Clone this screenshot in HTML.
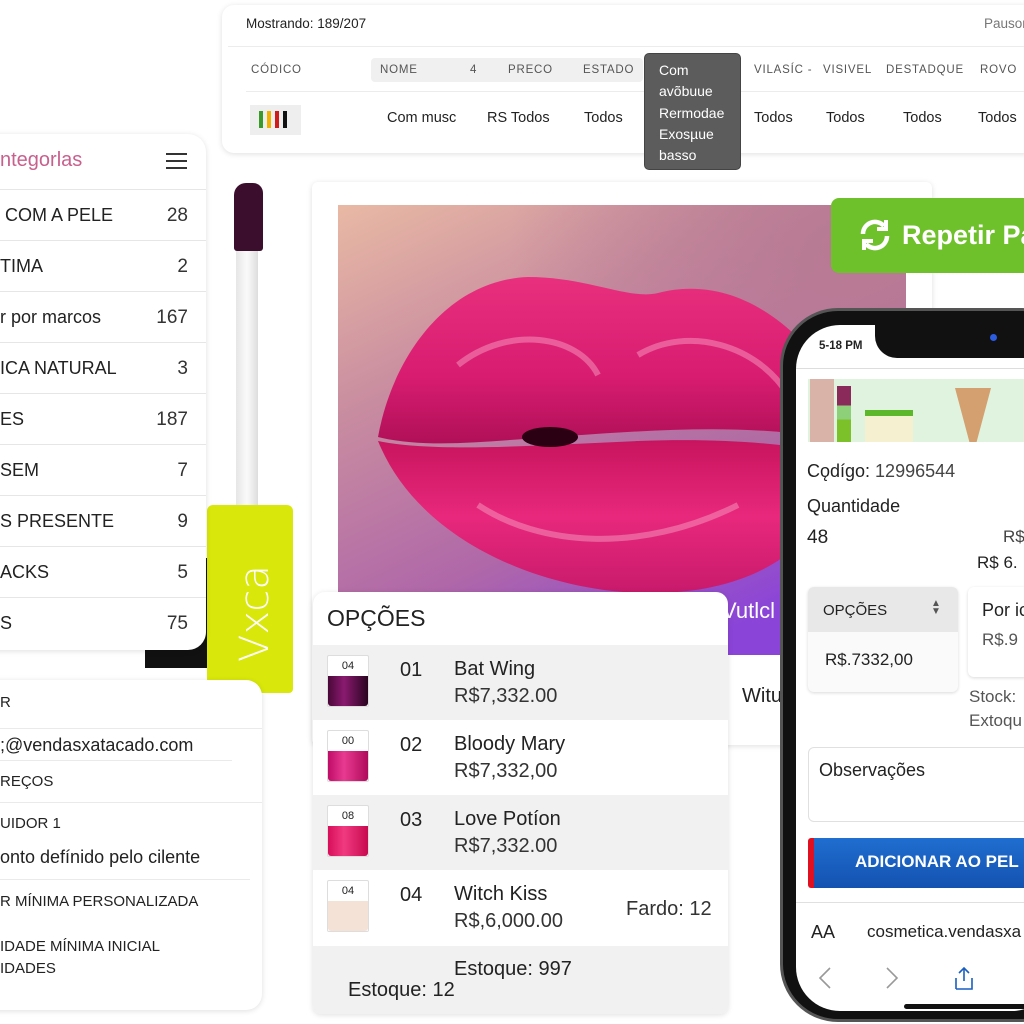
<!DOCTYPE html>
<html><head><meta charset="utf-8"><style>
*{margin:0;padding:0;box-sizing:border-box}
body{width:1024px;height:1024px;overflow:hidden;background:#fff;font-family:"Liberation Sans",sans-serif;color:#222;position:relative}
.a{position:absolute;white-space:nowrap}
.card{position:absolute;background:#fff;box-shadow:0 1px 6px rgba(0,0,0,.13)}
.hd{font-size:11.5px;letter-spacing:.8px;color:#555}
.t{font-size:14.5px;color:#222}
.cat{position:absolute;left:0;width:206px;height:51px;border-top:1px solid #e6e6e6;font-size:18px;color:#222}
.cat span{position:absolute;top:15px}
.cat b{position:absolute;right:18px;top:15px;font-weight:normal;color:#333;font-size:19px}
.row{position:absolute;left:313px;width:415px;height:75px}
.sw{position:absolute;left:14px;top:10px;width:42px;height:52px;border:1px solid #ddd;background:#fff;border-radius:2px;font-size:11px;text-align:center;line-height:20px}
.sw i{position:absolute;left:0;right:0;bottom:0;height:30px;border-radius:0 0 3px 3px}
.row .n{position:absolute;left:87px;top:14px;font-size:20px}
.row .nm{position:absolute;left:141px;top:13px;font-size:20px}
.row .p{position:absolute;left:141px;top:40px;font-size:20px;color:#333}
</style></head><body>

<!-- top card -->
<div class="card" style="left:222px;top:5px;width:820px;height:148px;border-radius:12px"></div>
<div class="a" style="left:246px;top:16px;font-size:13.5px">Mostrando: 189/207</div>
<div class="a" style="left:984px;top:16px;font-size:13.5px;color:#777">Pausor</div>
<div class="a" style="left:228px;top:46px;width:796px;height:1px;background:#ececec"></div>
<div class="a" style="left:371px;top:58px;width:272px;height:24px;background:#f0f0f0;border-radius:4px"></div>
<div class="a hd" style="left:251px;top:64px">CÓDICO</div>
<div class="a hd" style="left:380px;top:64px">NOME</div>
<div class="a hd" style="left:470px;top:64px">4</div>
<div class="a hd" style="left:508px;top:64px">PRECO</div>
<div class="a hd" style="left:583px;top:64px">ESTADO</div>
<div class="a hd" style="left:754px;top:64px">VILASÍC -</div>
<div class="a hd" style="left:823px;top:64px">VISIVEL</div>
<div class="a hd" style="left:886px;top:64px">DESTADQUE</div>
<div class="a hd" style="left:980px;top:64px">ROVO</div>
<div class="a" style="left:246px;top:91px;width:778px;height:1px;background:#ececec"></div>
<div class="a" style="left:250px;top:105px;width:51px;height:30px;background:#eee"></div>
<div class="a" style="left:259px;top:111px;width:4px;height:17px;background:#3a9a2a"></div>
<div class="a" style="left:267px;top:111px;width:4px;height:17px;background:#f0b400"></div>
<div class="a" style="left:275px;top:111px;width:4px;height:17px;background:#d01b1b"></div>
<div class="a" style="left:283px;top:111px;width:4px;height:17px;background:#111"></div>
<div class="a t" style="left:387px;top:110px">Com musc</div>
<div class="a t" style="left:487px;top:110px">RS Todos</div>
<div class="a t" style="left:584px;top:110px">Todos</div>
<div class="a t" style="left:754px;top:110px">Todos</div>
<div class="a t" style="left:826px;top:110px">Todos</div>
<div class="a t" style="left:903px;top:110px">Todos</div>
<div class="a t" style="left:978px;top:110px">Todos</div>
<div class="a" style="left:644px;top:53px;width:97px;height:117px;background:#5c5c5c;border:1px solid #444;border-radius:5px;color:#fff;font-size:14px;line-height:21.3px;padding:6px 0 0 14px">Com<br>avõbuue<br>Rermodae<br>Exosµue<br>basso</div>

<!-- wand -->
<div class="a" style="left:145px;top:558px;width:80px;height:110px;background:#111"></div>
<div class="a" style="left:236px;top:245px;width:22px;height:265px;background:linear-gradient(90deg,#e6e6e6,#fafafa 50%,#ddd)"></div>
<div class="a" style="left:234px;top:183px;width:29px;height:68px;background:#3b0e2e;border-radius:12px 10px 3px 3px"></div>
<div class="a" style="left:207px;top:505px;width:86px;height:188px;background:#d9e80a;border-radius:6px 6px 4px 4px"></div>
<div class="a" style="left:232px;top:662px;font-family:'DejaVu Sans',sans-serif;font-weight:200;font-size:40px;color:#fff;transform:rotate(-90deg);transform-origin:left top">Vxca</div>

<!-- categories -->
<div class="card" style="left:-10px;top:134px;width:216px;height:516px;border-radius:0 18px 18px 0"></div>
<div class="a" style="left:0;top:149px;font-size:20px;color:#c8608e">ntegorlas</div>
<div class="a" style="left:166px;top:153px;width:21px;height:2px;background:#333;box-shadow:0 7px 0 #333,0 14px 0 #333"></div>
<div class="cat" style="top:189px"><span>&nbsp;COM A PELE</span><b>28</b></div>
<div class="cat" style="top:240px"><span>TIMA</span><b>2</b></div>
<div class="cat" style="top:291px"><span>r por marcos</span><b>167</b></div>
<div class="cat" style="top:342px"><span>ICA NATURAL</span><b>3</b></div>
<div class="cat" style="top:393px"><span>ES</span><b>187</b></div>
<div class="cat" style="top:444px"><span>SEM</span><b>7</b></div>
<div class="cat" style="top:495px"><span>S PRESENTE</span><b>9</b></div>
<div class="cat" style="top:546px"><span>ACKS</span><b>5</b></div>
<div class="cat" style="top:597px"><span>S</span><b>75</b></div>

<!-- bottom-left card -->
<div class="card" style="left:-10px;top:680px;width:272px;height:330px;border-radius:0 16px 16px 0"></div>
<div class="a" style="left:0;top:694px;font-size:15px">R</div>
<div class="a" style="left:0;top:728px;width:262px;height:1px;background:#eaeaea"></div>
<div class="a" style="left:0;top:735px;font-size:18px">;@vendasxatacado.com</div>
<div class="a" style="left:0;top:760px;width:232px;height:1px;background:#eaeaea"></div>
<div class="a" style="left:0;top:773px;font-size:15px">REÇOS</div>
<div class="a" style="left:0;top:802px;width:262px;height:1px;background:#eaeaea"></div>
<div class="a" style="left:0;top:815px;font-size:15px">UIDOR 1</div>
<div class="a" style="left:0;top:847px;font-size:18px">onto defínido pelo cilente</div>
<div class="a" style="left:0;top:879px;width:250px;height:1px;background:#eaeaea"></div>
<div class="a" style="left:0;top:893px;font-size:15px">R MÍNIMA PERSONALIZADA</div>
<div class="a" style="left:0;top:936px;font-size:15px;line-height:22px">IDADE MÍNIMA INICIAL<br>IDADES</div>

<!-- main card -->
<div class="card" style="left:312px;top:182px;width:620px;height:563px;border-radius:6px"></div>
<svg class="a" style="left:338px;top:205px" width="568" height="450" viewBox="0 0 568 450">
<defs>
<linearGradient id="bg" x1="0" y1="0" x2="0.6" y2="1"><stop offset="0" stop-color="#e9b9a4"/><stop offset=".35" stop-color="#c88ca0"/><stop offset=".7" stop-color="#b068a8"/><stop offset="1" stop-color="#8a44d8"/></linearGradient>
<radialGradient id="tr" cx=".9" cy=".1" r=".6"><stop offset="0" stop-color="#b77a92"/><stop offset="1" stop-color="#b77a92" stop-opacity="0"/></radialGradient>
<linearGradient id="up" x1="0" y1="0" x2="0" y2="1"><stop offset="0" stop-color="#e8307e"/><stop offset=".6" stop-color="#d81c70"/><stop offset="1" stop-color="#b01058"/></linearGradient>
<linearGradient id="lo" x1="0" y1="0" x2="0" y2="1"><stop offset="0" stop-color="#c8145e"/><stop offset=".5" stop-color="#e8287c"/><stop offset="1" stop-color="#c81a6c"/></linearGradient>
</defs>
<rect width="568" height="450" fill="url(#bg)"/>
<rect width="568" height="450" fill="url(#tr)"/>
<path d="M40,232 C55,150 110,75 190,72 C250,72 290,95 320,88 C390,70 460,110 515,205 C525,232 505,238 480,232 C400,218 300,226 215,232 C150,236 90,244 40,232Z" fill="url(#up)"/>
<path d="M40,236 C100,248 200,240 300,236 C400,232 470,242 505,250 C495,330 430,392 300,388 C200,384 80,335 40,236Z" fill="url(#lo)"/>
<path d="M120,160 C170,120 240,130 260,170 M300,150 C350,120 420,140 450,190 M140,300 C200,340 300,350 400,300" stroke="#f79ac2" stroke-width="6" fill="none" opacity=".5"/>
<ellipse cx="212" cy="232" rx="28" ry="10" fill="#2a0012"/>
</svg>
<div class="a" style="left:722px;top:598px;font-size:22px;color:#fff">Vutlcl</div>
<div class="a" style="left:742px;top:685px;font-size:20px">Witu</div>

<!-- options -->
<div class="card" style="left:313px;top:592px;width:415px;height:422px;border-radius:12px 12px 8px 8px"></div>
<div class="a" style="left:327px;top:605px;font-size:23px">OPÇÕES</div>
<div class="row" style="top:645px;background:#f1f1f1"><div class="sw">04<i style="background:linear-gradient(90deg,#4a0838,#8a1a70 40%,#2a0420)"></i></div><div class="n">01</div><div class="nm">Bat Wing</div><div class="p">R$7,332.00</div></div>
<div class="row" style="top:720px;background:#fff"><div class="sw">00<i style="background:linear-gradient(90deg,#c00c68,#e83a90 40%,#b00a5c)"></i></div><div class="n">02</div><div class="nm">Bloody Mary</div><div class="p">R$7,332,00</div></div>
<div class="row" style="top:795px;background:#f1f1f1"><div class="sw">08<i style="background:linear-gradient(90deg,#d80e5a,#f03a80 40%,#c80a50)"></i></div><div class="n">03</div><div class="nm">Love Potíon</div><div class="p">R$7,332.00</div></div>
<div class="row" style="top:870px;background:#fff"><div class="sw">04<i style="background:#f5e2d6"></i></div><div class="n">04</div><div class="nm">Witch Kiss</div><div class="p">R$,6,000.00</div><div class="a" style="left:313px;top:28px;font-size:20px;color:#333">Fardo: 12</div></div>
<div class="a" style="left:313px;top:946px;width:415px;height:68px;background:#f1f1f1;border-radius:0 0 8px 8px"></div>
<div class="a" style="left:454px;top:958px;font-size:20px">Estoque: 997</div>
<div class="a" style="left:348px;top:979px;font-size:20px">Estoque: 12</div>

<!-- green button -->
<div class="a" style="left:831px;top:198px;width:220px;height:75px;background:#6fc12b;border-radius:8px"></div>
<svg class="a" style="left:858px;top:218px" width="34" height="34" viewBox="0 0 34 34" fill="none" stroke="#fff" stroke-width="4.5"><path d="M5 16a12 12 0 0 1 21-8"/><path d="M29 18a12 12 0 0 1-21 8"/><path d="M28 2v9h-9" stroke-width="4"/><path d="M6 32v-9h9" stroke-width="4"/></svg>
<div class="a" style="left:902px;top:220px;font-size:27px;font-weight:bold;color:#fff">Repetir Pa</div>

<!-- phone -->
<div class="a" style="left:780px;top:308px;width:300px;height:714px;background:#111;border-radius:58px;border:3px solid #555"></div>
<div class="a" style="left:796px;top:325px;width:260px;height:686px;background:#fff;border-radius:44px"></div>
<div class="a" style="left:875px;top:318px;width:200px;height:40px;background:#111;border-radius:0 0 0 22px"></div>
<div class="a" style="left:990px;top:334px;width:7px;height:7px;background:#2c5ce0;border-radius:50%"></div>
<div class="a" style="left:819px;top:340px;font-size:11.5px;font-weight:bold">5-18 PM</div>
<div class="a" style="left:796px;top:368px;width:228px;height:1px;background:#ddd"></div>
<div class="a" style="left:808px;top:379px;width:216px;height:63px;background:#dff3df"></div>
<div class="a" style="left:810px;top:379px;width:24px;height:63px;background:#d9b3a8"></div>
<div class="a" style="left:837px;top:386px;width:14px;height:56px;background:linear-gradient(#8a2a5a 0 35%,#8ed07a 35% 60%,#7cc02a 60%)"></div>
<div class="a" style="left:865px;top:410px;width:48px;height:32px;background:#f4f0d0;border-top:6px solid #5cb82a"></div>
<div class="a" style="left:955px;top:388px;width:36px;height:54px;background:#d4a070;clip-path:polygon(0 0,100% 0,60% 100%,40% 100%)"></div>
<div class="a" style="left:807px;top:461px;font-size:18px">Cǫdígo: <span style="color:#444">12996544</span></div>
<div class="a" style="left:807px;top:496px;font-size:18px">Quantidade</div>
<div class="a" style="left:807px;top:527px;font-size:19px">48</div>
<div class="a" style="left:1003px;top:527px;font-size:17px;color:#444">R$</div>
<div class="a" style="left:977px;top:553px;font-size:17px">R$ 6.</div>
<div class="a" style="left:808px;top:587px;width:150px;height:105px;background:#fafafa;border-radius:6px;box-shadow:0 1px 3px rgba(0,0,0,.15)"></div>
<div class="a" style="left:808px;top:587px;width:150px;height:45px;background:#e8e8e8;border-radius:6px 6px 0 0"></div>
<div class="a" style="left:823px;top:602px;font-size:15px">OPÇÕES</div>
<div class="a" style="left:931px;top:600px;font-size:10px;color:#555;line-height:8px">▲<br>▼</div>
<div class="a" style="left:825px;top:650px;font-size:17px">R$.7332,00</div>
<div class="a" style="left:968px;top:587px;width:70px;height:90px;background:#fff;border-radius:6px;box-shadow:0 1px 3px rgba(0,0,0,.15)"></div>
<div class="a" style="left:982px;top:600px;font-size:18px">Por ic</div>
<div class="a" style="left:982px;top:630px;font-size:17px;color:#555">R$.9</div>
<div class="a" style="left:969px;top:685px;font-size:17px;color:#555;line-height:24px">Stock:<br>Extoqu</div>
<div class="a" style="left:808px;top:747px;width:230px;height:75px;border:1px solid #e0e0e0;border-radius:6px"></div>
<div class="a" style="left:819px;top:760px;font-size:18px">Observações</div>
<div class="a" style="left:808px;top:838px;width:230px;height:50px;background:linear-gradient(#1f6ed0,#1452b0);border-left:6px solid #e01020;border-radius:3px"></div>
<div class="a" style="left:855px;top:852px;font-size:17px;font-weight:bold;color:#fff">ADICIONAR AO PEL</div>
<div class="a" style="left:796px;top:902px;width:228px;height:1px;background:#e0e0e0"></div>
<div class="a" style="left:811px;top:922px;font-size:18px">AA</div>
<div class="a" style="left:867px;top:922px;font-size:17px">cosmetica.vendasxa</div>
<svg class="a" style="left:815px;top:965px" width="180" height="28" viewBox="0 0 180 28" fill="none" stroke-width="1.6"><path d="M15 3 5 13l10 10" stroke="#999"/><path d="M72 3l10 10-10 10" stroke="#999"/><path d="M141 24h16V13M141 24V13M149 3v13M144 8l5-5 5 5" stroke="#1a5fc0"/></svg>
<div class="a" style="left:904px;top:1004px;width:130px;height:5px;background:#111;border-radius:3px"></div>
</body></html>
